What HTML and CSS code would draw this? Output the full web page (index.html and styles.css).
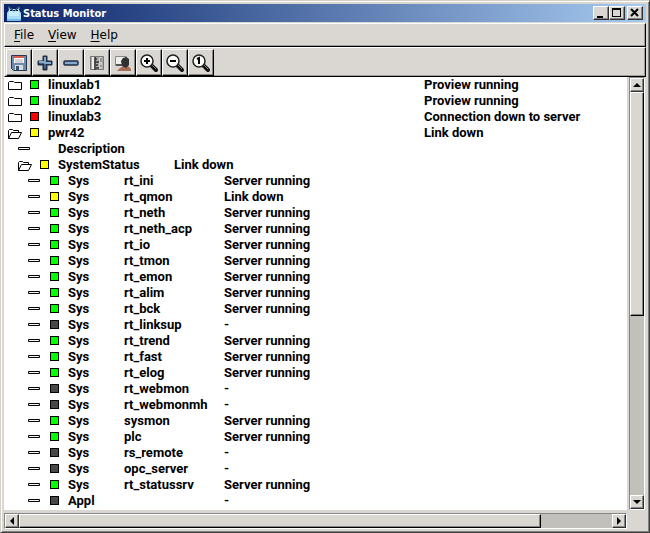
FILE: index.html
```
<!DOCTYPE html>
<html lang="en">
<head>
<meta charset="utf-8">
<title>Status Monitor</title>
<link rel="stylesheet" href="styles.css">
</head>
<body>
<svg class="defs" aria-hidden="true">
  <symbol id="folder" viewBox="0 0 14 11"><path d="M.5 2.500l1-1h4l1 1h7v7H.5z" fill="#fff" stroke="#000"/></symbol>
  <symbol id="open" viewBox="0 0 14 11"><path d="M.5 10.500v-8l1-1h3l1 1h5v2M.5 10.500l3-6h10l-3 6z" fill="#fff" stroke="#000"/></symbol>
  <symbol id="leaf" viewBox="0 0 14 11"><path d="M.5 3.500h11v2H.5z" fill="#fff" stroke="#000"/></symbol>
  <symbol id="lens" viewBox="0 0 20 20"><path d="M12 12l5 5" stroke="#111" stroke-width="4" stroke-linecap="round"/><path d="M13 12l4 4" stroke="#777" stroke-width="1"/><circle cx="8" cy="8" r="6" fill="#fff" stroke="#222" stroke-width="1.5"/></symbol>
</svg>
<div class="window">
  <header class="title">
    <svg class="logo" viewBox="0 0 16 16" aria-hidden="true"><path d="M1 15V8l2-3L2 1l4 3h4l4-3-1 4 2 3v7z" fill="#a9dcf8"/><path d="M3 6h10v5H3z" fill="#c6ecff"/><path d="M1 1l4 3 3 2 3-2 4-3" fill="none" stroke="#111d35"/><path d="M4 5h2v1H4zM10 5h2v1h-2z" fill="#123"/><path d="M1 15h14" stroke="#78b7e2" stroke-width="2"/></svg>
    <h1>Status Monitor</h1>
    <button class="cap" aria-label="Minimize"><svg viewBox="0 0 14 12"><path d="M3 9h6v2H3z"/></svg></button>
    <button class="cap" aria-label="Maximize"><svg viewBox="0 0 14 12"><path d="M2 1h9v9H2zM3 3v6h7V3z" fill-rule="evenodd"/></svg></button>
    <button class="cap close" aria-label="Close"><svg viewBox="0 0 14 12"><path d="M3 2l7 7M10 2L3 9" stroke="#000" stroke-width="2"/></svg></button>
  </header>
  <nav class="menu">
    <button><u>F</u>ile</button><button><u>V</u>iew</button><button><u>H</u>elp</button>
  </nav>
  <div class="toolbar">
    <button aria-label="Save"><svg viewBox="0 0 20 20"><path d="M2.500 2.500h15v15h-13l-2-2z" fill="#6c8bad" stroke="#26384f"/><path d="M5 3h10v7H5z" fill="#fff"/><path d="M5 3h10v2H5z" fill="#d95f4f"/><path d="M6 7h8M6 9h8" stroke="#aaa"/><path d="M6 12h8v5H6z" fill="#d8dedc"/><path d="M7 13h3v4H7z" fill="#38506a"/></svg></button>
    <button aria-label="Expand"><svg viewBox="0 0 20 20"><path d="M8.500 3.500h3v5h5v3h-5v5h-3v-5h-5v-3h5z" fill="#7397bd" stroke="#1e3146" stroke-width="2" stroke-linejoin="round"/><path d="M10 4v5H4M10 10h6" fill="none" stroke="#86a8ca" stroke-width="2"/></svg></button>
    <button aria-label="Collapse"><svg viewBox="0 0 20 20"><rect x="3" y="8" width="14" height="4" rx="1" fill="#7397bd" stroke="#1e3146" stroke-width="1.500"/><path d="M4 10h12" stroke="#86a8ca" stroke-width="2"/></svg></button>
    <button aria-label="Rack"><svg viewBox="0 0 20 20"><path d="M3.500 3.500h13v13h-13z" fill="#aaa" stroke="#777"/><path d="M5 4h2v12H5z" fill="#eee"/><path d="M12 4h3v12h-3z" fill="#ccc"/><path d="M8 4v13M8 6h2M8 9h4M9 12h2M9 15h3" stroke="#333" stroke-width="1.500"/><path d="M13 6h2M13 8h2M13 13h2" stroke="#666"/></svg></button>
    <button aria-label="Operator"><svg viewBox="0 0 20 20"><path d="M2.500 3.500h11v9h-11z" fill="#eee" stroke="#888"/><path d="M3 12h7" stroke="#555" stroke-width="2"/><path d="M4 18l3-3 4-2h4l3 3v2z" fill="#a66f55"/><path d="M8 8l2-3 3-1 3 2v6l-3 3-4-2z" fill="#303030"/></svg></button>
    <button aria-label="Zoom in"><svg viewBox="0 0 20 20"><use href="#lens"/><path d="M5 8h6M8 5v6" stroke="#000" stroke-width="2"/></svg></button>
    <button aria-label="Zoom out"><svg viewBox="0 0 20 20"><use href="#lens"/><path d="M5 8h6" stroke="#000" stroke-width="2"/></svg></button>
    <button aria-label="Zoom reset"><svg viewBox="0 0 20 20"><use href="#lens"/><path d="M6 6l2-1v6" fill="none" stroke="#000" stroke-width="2"/></svg></button>
  </div>
  <main class="view">
    <div class="tree">
      <ul class="nodes">
        <li><div class="row"><svg class="icon"><use href="#folder"/></svg><i class="lamp green"></i><span class="node">linuxlab1</span><span>Proview running</span></div></li>
        <li><div class="row"><svg class="icon"><use href="#folder"/></svg><i class="lamp green"></i><span class="node">linuxlab2</span><span>Proview running</span></div></li>
        <li><div class="row"><svg class="icon"><use href="#folder"/></svg><i class="lamp red"></i><span class="node">linuxlab3</span><span>Connection down to server</span></div></li>
        <li><div class="row"><svg class="icon"><use href="#open"/></svg><i class="lamp yellow"></i><span class="node">pwr42</span><span>Link down</span></div>
          <ul>
            <li><div class="row"><svg class="icon"><use href="#leaf"/></svg><i class="lamp none"></i><span>Description</span></div></li>
            <li><div class="row"><svg class="icon"><use href="#open"/></svg><i class="lamp yellow"></i><span class="group">SystemStatus</span><span>Link down</span></div>
              <ul id="servers"></ul>
            </li>
          </ul>
        </li>
      </ul>
    </div>
    <div class="bar vertical">
      <button aria-label="Scroll up"><svg viewBox="0 0 8 8"><path d="M4 2l4 4H0z"/></svg></button>
      <div class="thumb"></div>
      <button class="end" aria-label="Scroll down"><svg viewBox="0 0 8 8"><path d="M0 2h8L4 6z"/></svg></button>
    </div>
    <div class="bar horizontal">
      <button aria-label="Scroll left"><svg viewBox="0 0 8 8"><path d="M6 0v8L2 4z"/></svg></button>
      <div class="thumb"></div>
      <button class="end" aria-label="Scroll right"><svg viewBox="0 0 8 8"><path d="M2 0l4 4-4 4z"/></svg></button>
    </div>
  </main>
</div>
<script src="script.js"></script>
</body>
</html>
```
FILE: script.js
```
const up = "Server running";
const servers = [
  ["green", "Sys", "rt_ini", up], ["yellow", "Sys", "rt_qmon", "Link down"],
  ["green", "Sys", "rt_neth", up], ["green", "Sys", "rt_neth_acp", up],
  ["green", "Sys", "rt_io", up], ["green", "Sys", "rt_tmon", up],
  ["green", "Sys", "rt_emon", up], ["green", "Sys", "rt_alim", up],
  ["green", "Sys", "rt_bck", up], ["gray", "Sys", "rt_linksup", "-"],
  ["green", "Sys", "rt_trend", up], ["green", "Sys", "rt_fast", up],
  ["green", "Sys", "rt_elog", up], ["gray", "Sys", "rt_webmon", "-"],
  ["gray", "Sys", "rt_webmonmh", "-"], ["green", "Sys", "sysmon", up],
  ["green", "Sys", "plc", up], ["gray", "Sys", "rs_remote", "-"],
  ["gray", "Sys", "opc_server", "-"], ["green", "Sys", "rt_statussrv", up],
  ["gray", "Appl", "", "-"]
];
document.getElementById("servers").innerHTML = servers.map(([lamp, kind, name, status]) =>
  `<li><div class="row"><svg class="icon"><use href="#leaf"/></svg><i class="lamp ${lamp}"></i>` +
  `<span class="kind">${kind}</span><span class="name">${name}</span><span>${status}</span></div></li>`
).join("");
```
FILE: styles.css
```
* { box-sizing: border-box; }
body { margin: 0; background: #dad7d2; font-family: "DejaVu Sans", sans-serif; color: #000; }
button { margin: 0; padding: 0; border: 0; background: none; font: inherit; color: inherit; }
svg { display: block; }
.defs { position: absolute; width: 0; height: 0; }
.window {
  display: flex; flex-direction: column; height: 100vh; padding: 3px 3px 3px 3px;
  border: 1px solid; border-color: #d4d0c8 #404040 #404040 #d4d0c8;
  box-shadow: inset 1px 1px #fff, inset -1px -1px #808080;
}
.title {
  display: flex; flex: none; align-items: center; height: 18px; padding: 0 3px 0 2px;
  background: linear-gradient(90deg, #0a246a, #a6caf0);
}
.logo { width: 16px; height: 16px; margin-right: 1px; }
h1 { flex: 1; margin: 0; color: #fff; font: bold 11px "DejaVu Sans Condensed", "DejaVu Sans", sans-serif; }
.cap, .bar button, .thumb {
  background: #dad7d2; border: 1px solid; border-color: #fff #303030 #303030 #fff;
  box-shadow: inset -1px -1px #858585;
}
.cap { width: 16px; height: 14px; }
.cap svg { width: 14px; height: 12px; }
.close { margin-left: 2px; }
.menu {
  display: flex; flex: none; align-items: center; gap: 14px; height: 24px; padding: 0 9px; margin-top: 1px;
  border: 1px solid; border-color: #fff #000 #000 #fff; box-shadow: inset -1px -1px #a09e9a; font-size: 12px;
}
.menu u { text-underline-offset: 2px; }
.toolbar {
  display: flex; flex: none; height: 30px; padding: 1px;
  border: 1px solid; border-color: #fff #000 #000 #fff; box-shadow: inset -1px -1px #a09e9a;
}
.toolbar button {
  display: grid; place-items: center; width: 26px; height: 27px;
  border: 1px solid; border-color: #fff #000 #000 #fff; box-shadow: inset -1px -1px #858585;
}
.toolbar svg { width: 20px; height: 20px; }
.view {
  display: grid; flex: 1; min-height: 0; grid-template: minmax(0, 1fr) 16px / minmax(0, 1fr) 16px;
  gap: 3px 2px; padding-right: 1px;
}
.tree { overflow: hidden; background: #fff; font: bold 13px/16px Roboto, sans-serif; }
ul { margin: 0; padding: 0 0 0 10px; list-style: none; }
.nodes { padding-left: 4px; }
.row { display: flex; align-items: flex-start; height: 16px; white-space: nowrap; }
.icon { width: 14px; height: 11px; margin: 3px 8px 0 0; }
.lamp { width: 9px; height: 9px; margin: 3px 9px 0 0; border: 1px solid #000; }
.green { background: #0f0; }
.yellow { background: #ff0; }
.red { background: #f00; }
.gray { background: #484848; }
.none { visibility: hidden; }
.node { width: 376px; }
.group { width: 116px; }
.kind { width: 56px; }
.name { width: 100px; }
.bar { display: flex; background: #c2c0bb; border: 1px solid; border-color: #858585 #fff #fff #858585; }
.bar button { display: grid; flex: none; place-items: center; width: 14px; height: 14px; }
.bar svg { width: 8px; height: 8px; }
.thumb { border-color: #fff #000 #000 #fff; }
.vertical { flex-direction: column; }
.vertical .thumb { height: 52%; }
.vertical .end { margin-top: auto; }
.horizontal .thumb { width: 84%; }
.horizontal .end { margin-left: auto; }
```
